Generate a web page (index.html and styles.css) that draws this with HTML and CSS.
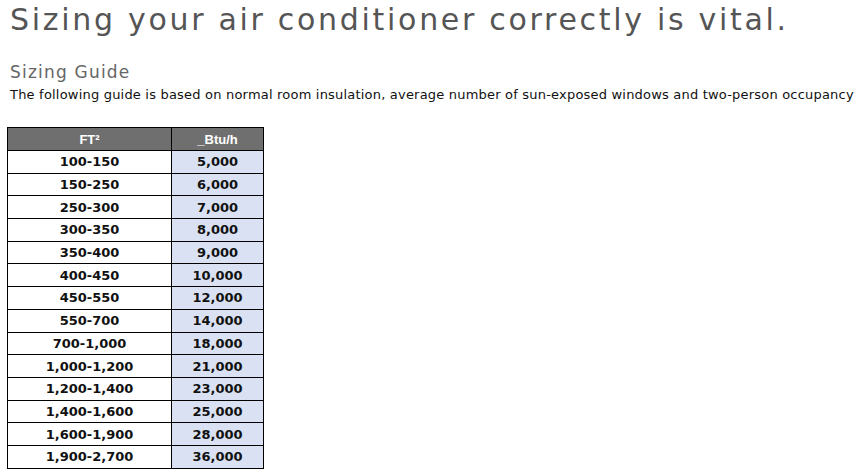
FILE: index.html
```html
<!DOCTYPE html>
<html>
<head>
<meta charset="utf-8">
<link rel="stylesheet" href="styles.css">
</head>
<body>
<h1 class="title">Sizing your air conditioner correctly is vital.</h1>
<h2 class="subtitle">Sizing Guide</h2>
<p class="intro">The following guide is based on normal room insulation, average number of sun-exposed windows and two-person occupancy</p>
<table class="sizing">
  <thead>
    <tr><th>FT²</th><th>_Btu/h</th></tr>
  </thead>
  <tbody>
    <tr><td>100-150</td><td class="btu">5,000</td></tr>
    <tr><td>150-250</td><td class="btu">6,000</td></tr>
    <tr><td>250-300</td><td class="btu">7,000</td></tr>
    <tr><td>300-350</td><td class="btu">8,000</td></tr>
    <tr><td>350-400</td><td class="btu">9,000</td></tr>
    <tr><td>400-450</td><td class="btu">10,000</td></tr>
    <tr><td>450-550</td><td class="btu">12,000</td></tr>
    <tr><td>550-700</td><td class="btu">14,000</td></tr>
    <tr><td>700-1,000</td><td class="btu">18,000</td></tr>
    <tr><td>1,000-1,200</td><td class="btu">21,000</td></tr>
    <tr><td>1,200-1,400</td><td class="btu">23,000</td></tr>
    <tr><td>1,400-1,600</td><td class="btu">25,000</td></tr>
    <tr><td>1,600-1,900</td><td class="btu">28,000</td></tr>
    <tr><td>1,900-2,700</td><td class="btu">36,000</td></tr>
  </tbody>
</table>
</body>
</html>
```

FILE: styles.css
```css
body {
  margin: 0;
  padding: 0 0 0 10px;
  font-family: "DejaVu Sans", sans-serif;
  background: #fff;
}
.title {
  margin: 0;
  padding-top: 2px;
  font-size: 30px;
  font-weight: normal;
  color: #555;
  letter-spacing: 2.7px;
  line-height: 36px;
}
.subtitle {
  margin: 23px 0 0 0;
  font-size: 17px;
  font-weight: normal;
  color: #666;
  letter-spacing: 1.2px;
  line-height: 22px;
}
.intro {
  margin: 3px 0 0 0;
  font-size: 13px;
  letter-spacing: 0.2px;
  color: #111;
  line-height: 17px;
  white-space: nowrap;
}
.sizing {
  margin: 24px 0 0 -3px;
  border-collapse: collapse;
  font-size: 13px;
}
.sizing th, .sizing td {
  border: 1px solid #000;
  text-align: center;
  height: 21.7px;
  padding: 0;
  line-height: 21px;
}
.sizing th {
  background: #6f6f6f;
  color: #fff;
  font-family: "Liberation Sans", sans-serif;
  font-weight: bold;
  height: 22px;
}
.sizing th:first-child, .sizing td:first-child {
  width: 163px;
}
.sizing th:last-child, .sizing td:last-child {
  width: 91px;
}
.sizing td {
  font-weight: bold;
  color: #111;
}
.sizing td.btu {
  background: #d9e1f2;
}
```
